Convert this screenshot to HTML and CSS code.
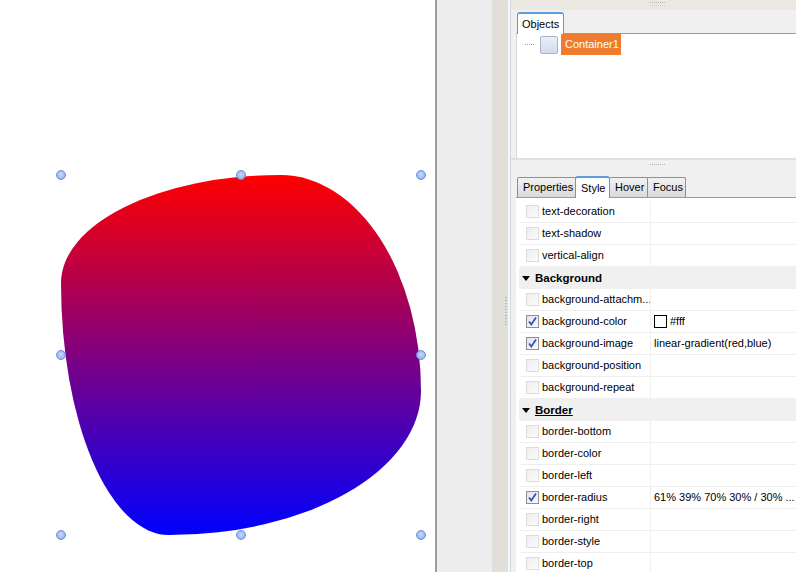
FILE: index.html
```html
<!DOCTYPE html>
<html>
<head>
<meta charset="utf-8">
<link rel="stylesheet" href="styles.css">
</head>
<body>
<div class="app">
  <div class="canvas">
    <div class="shape"></div>
    <span class="handle h-tl"></span>
    <span class="handle h-tc"></span>
    <span class="handle h-tr"></span>
    <span class="handle h-ml"></span>
    <span class="handle h-mr"></span>
    <span class="handle h-bl"></span>
    <span class="handle h-bc"></span>
    <span class="handle h-br"></span>
  </div>
  <div class="gutter"></div>
  <div class="splitter"><span class="vgrip"></span></div>
  <div class="edge"></div>
  <div class="panel">
    <div class="grip-bar"><span class="grip"></span></div>
    <div class="tabs obj-tabs">
      <div class="tab active tab-objects">Objects</div>
    </div>
    <div class="objects">
      <div class="tree-row">
        <span class="tree-line"></span>
        <span class="tree-icon"></span>
        <span class="tree-label">Container1</span>
      </div>
    </div>
    <div class="hsplit"><span class="grip"></span></div>
    <div class="tabs prop-tabs">
      <div class="tab t-props">Properties</div>
      <div class="tab active t-style">Style</div>
      <div class="tab t-hover">Hover</div>
      <div class="tab t-focus">Focus</div>
    </div>
    <div class="grid">
      <div class="row"><span class="cb"></span><span class="name">text-decoration</span><span class="value"></span></div>
      <div class="row"><span class="cb"></span><span class="name">text-shadow</span><span class="value"></span></div>
      <div class="row"><span class="cb"></span><span class="name">vertical-align</span><span class="value"></span></div>
      <div class="group"><span class="tri"></span><span class="gname">Background</span></div>
      <div class="row"><span class="cb"></span><span class="name">background-attachm...</span><span class="value"></span></div>
      <div class="row"><span class="cb checked"><svg viewBox="0 0 13 13" width="13" height="13"><path d="M3 6.5 L5.3 9.5 L10 2.5" fill="none" stroke="#2f55b8" stroke-width="1.8"/></svg></span><span class="name">background-color</span><span class="value"><span class="swatch"></span>#fff</span></div>
      <div class="row"><span class="cb checked"><svg viewBox="0 0 13 13" width="13" height="13"><path d="M3 6.5 L5.3 9.5 L10 2.5" fill="none" stroke="#2f55b8" stroke-width="1.8"/></svg></span><span class="name">background-image</span><span class="value">linear-gradient(red,blue)</span></div>
      <div class="row"><span class="cb"></span><span class="name">background-position</span><span class="value"></span></div>
      <div class="row"><span class="cb"></span><span class="name">background-repeat</span><span class="value"></span></div>
      <div class="group"><span class="tri"></span><span class="gname focused">Border</span></div>
      <div class="row"><span class="cb"></span><span class="name">border-bottom</span><span class="value"></span></div>
      <div class="row"><span class="cb"></span><span class="name">border-color</span><span class="value"></span></div>
      <div class="row"><span class="cb"></span><span class="name">border-left</span><span class="value"></span></div>
      <div class="row"><span class="cb checked"><svg viewBox="0 0 13 13" width="13" height="13"><path d="M3 6.5 L5.3 9.5 L10 2.5" fill="none" stroke="#2f55b8" stroke-width="1.8"/></svg></span><span class="name">border-radius</span><span class="value">61% 39% 70% 30% / 30% ...</span></div>
      <div class="row"><span class="cb"></span><span class="name">border-right</span><span class="value"></span></div>
      <div class="row"><span class="cb"></span><span class="name">border-style</span><span class="value"></span></div>
      <div class="row"><span class="cb"></span><span class="name">border-top</span><span class="value"></span></div>
    </div>
  </div>
</div>
</body>
</html>
```

FILE: styles.css
```css
html, body {
  margin: 0;
  padding: 0;
  width: 796px;
  height: 572px;
  overflow: hidden;
  font-family: "Liberation Sans", Arial, sans-serif;
  font-size: 11px;
  color: #000;
}

.app {
  display: flex;
  width: 796px;
  height: 572px;
}

.canvas {
  position: relative;
  width: 435px;
  height: 572px;
  background: #fff;
  border-right: 2px solid #9c9c9c;
  flex: none;
}

.shape {
  position: absolute;
  left: 61px;
  top: 175px;
  width: 360px;
  height: 360px;
  background-color: #fff;
  background-image: linear-gradient(red, blue);
  border-radius: 61% 39% 70% 30% / 30% 60% 40% 70%;
}

.handle {
  position: absolute;
  width: 10px;
  height: 10px;
  margin: -5px 0 0 -5px;
  box-sizing: border-box;
  border-radius: 50%;
  border: 1px solid #6b8fdc;
  background: radial-gradient(circle at 50% 45%, #c9d9fa 0, #a2bdf3 55%, #86a6ea 100%);
}
.h-tl { left: 61px; top: 175px; }
.h-tc { left: 241px; top: 175px; }
.h-tr { left: 421px; top: 175px; }
.h-ml { left: 61px; top: 355px; }
.h-mr { left: 421px; top: 355px; }
.h-bl { left: 61px; top: 535px; }
.h-bc { left: 241px; top: 535px; }
.h-br { left: 421px; top: 535px; }

.gutter {
  width: 55px;
  flex: none;
  background: #ededed;
}

.splitter {
  width: 16px;
  flex: none;
  background: #e2dfda;
  display: flex;
  flex-direction: column;
  align-items: flex-end;
  padding-top: 297px;
  box-sizing: border-box;
}

.vgrip {
  width: 2px;
  height: 28px;
  margin-right: 1px;
  background: repeating-linear-gradient(to bottom, #b3b8c4 0, #b3b8c4 1px, transparent 1px, transparent 3px);
}

.edge {
  width: 2px;
  flex: none;
  background: #f4f6fa;
  border-right: 1px solid #d4d8df;
}

.panel {
  width: 285px;
  height: 572px;
  flex: none;
  display: flex;
  flex-direction: column;
  background: #f0f0f0;
  overflow: hidden;
}

.panel > * {
  flex: none;
}

.grip-bar {
  height: 10px;
  background: #ebe8e2;
  display: flex;
  justify-content: center;
  padding-top: 2px;
  box-sizing: border-box;
}

.grip {
  width: 15px;
  height: 5px;
  margin-left: 7px;
  background:
    repeating-linear-gradient(to right, #b7b2a8 0, #b7b2a8 1px, transparent 1px, transparent 2px) 0 0 / 100% 1px no-repeat,
    repeating-linear-gradient(to right, #d6d2ca 0, #d6d2ca 1px, transparent 1px, transparent 2px) 0 3px / 100% 1px no-repeat;
}

.tabs {
  display: flex;
  align-items: flex-end;
  padding-left: 6px;
  position: relative;
  z-index: 1;
  box-sizing: border-box;
}

.obj-tabs {
  height: 23px;
  background: #f0f0f0;
}

.tab {
  box-sizing: border-box;
  height: 20px;
  line-height: 18px;
  padding: 0 5px;
  border: 1px solid #8e8f8f;
  border-bottom: none;
  border-radius: 2px 2px 0 0;
  background: linear-gradient(to bottom, #f2f2f2 0, #e6e6e6 50%, #d9d9d9 100%);
  white-space: nowrap;
}

.tab.active {
  height: 22px;
  margin-bottom: -1px;
  line-height: 21px;
  background: #fff;
  border-color: #8e8f8f;
  border-top: 2px solid #5aa0e0;
  border-radius: 3px 3px 0 0;
}

.tab-objects {
  width: 47px;
  padding: 0 4px;
}

.objects {
  height: 125px;
  margin-left: 5px;
  background: #fff;
  border-top: 1px solid #9b9b9b;
  border-left: 1px solid #d9d9d9;
  box-sizing: border-box;
}

.tree-row {
  display: flex;
  align-items: center;
  height: 21px;
  padding-left: 8px;
}

.tree-line {
  width: 10px;
  height: 1px;
  background: repeating-linear-gradient(to right, #9a9a9a 0, #9a9a9a 1px, transparent 1px, transparent 2px);
  margin-right: 5px;
  margin-top: -1px;
}

.tree-icon {
  width: 18px;
  height: 18px;
  box-sizing: border-box;
  border: 1px solid #a7b4c4;
  border-radius: 2px;
  background: linear-gradient(to bottom, #e9eff7, #cfdcec);
  margin-right: 3px;
}

.tree-label {
  height: 21px;
  line-height: 21px;
  padding: 0 4px;
  width: 60px;
  box-sizing: border-box;
  background: #ef7b2f;
  color: #fff;
}

.hsplit {
  height: 17px;
  background: #f0f0f0;
  border-top: 2px solid #e6ded6;
  box-sizing: border-box;
  display: flex;
  justify-content: center;
  padding-top: 4px;
}

.hsplit .grip {
  height: 3px;
}

.prop-tabs {
  height: 22px;
  background: #f0f0f0;
}

.t-props { width: 59px; }
.t-style { width: 35px; margin-left: -1px; margin-right: -1px; position: relative; z-index: 2; }
.t-hover { width: 39px; }
.t-focus { width: 39px; margin-left: -1px; }

.panel > .grid {
  flex: 1 1 0;
  min-height: 0;
  overflow: hidden;
  background: #fff;
  border-top: 1px solid #9b9b9b;
  margin-left: 5px;
  padding-top: 3px;
  padding-left: 3px;
}

.row {
  display: flex;
  align-items: center;
  height: 22px;
  margin-left: 1px;
  border-bottom: 1px solid #efefef;
  box-sizing: border-box;
}

.cb {
  width: 13px;
  height: 13px;
  box-sizing: border-box;
  border: 1px solid #dcdcdc;
  background: linear-gradient(135deg, #eeeeee, #fbfbfb);
  margin-left: 6px;
  margin-right: 3px;
  position: relative;
  flex: none;
}

.cb.checked {
  border-color: #8c8e94;
  background: linear-gradient(135deg, #e2e4ea, #fafbfd);
}

.cb svg {
  position: absolute;
  left: -1px;
  top: -1px;
}

.name {
  width: 108px;
  height: 22px;
  line-height: 21px;
  border-right: 1px solid #efefef;
  flex: none;
  white-space: nowrap;
  overflow: hidden;
}

.value {
  flex: 1;
  min-width: 0;
  padding-left: 3px;
  display: flex;
  align-items: center;
  white-space: nowrap;
  line-height: 21px;
}

.swatch {
  width: 13px;
  height: 13px;
  box-sizing: border-box;
  border: 1px solid #000;
  background: #fff;
  margin-right: 3px;
}

.group {
  display: flex;
  align-items: center;
  height: 22px;
  background: #f0f0f0;
  font-weight: bold;
  font-size: 11.5px;
}

.tri {
  width: 0;
  height: 0;
  border-left: 4px solid transparent;
  border-right: 4px solid transparent;
  border-top: 5px solid #000;
  margin-left: 3px;
  margin-right: 5px;
}

.gname.focused {
  text-decoration: underline;
}
```
